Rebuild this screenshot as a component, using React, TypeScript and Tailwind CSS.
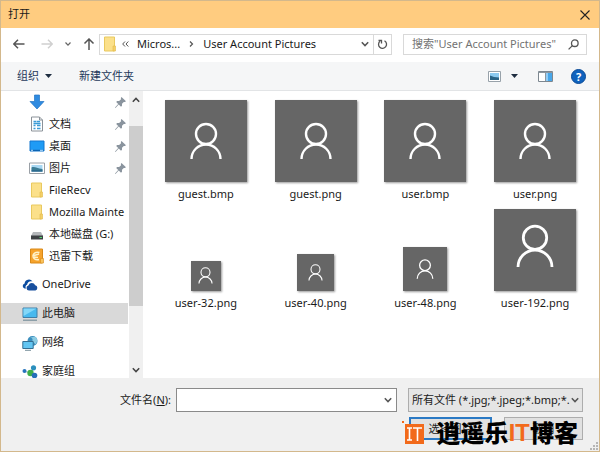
import { ReactNode, useState } from "react";

const files = [
  { name: "guest.bmp", box: "w-[82px] h-[82px]", icon: "w-[82px] h-[82px]" },
  { name: "guest.png", box: "w-[82px] h-[82px]", icon: "w-[82px] h-[82px]" },
  { name: "user.bmp", box: "w-[82px] h-[82px]", icon: "w-[82px] h-[82px]" },
  { name: "user.png", box: "w-[82px] h-[82px]", icon: "w-[82px] h-[82px]" },
  { name: "user-32.png", box: "w-[30px] h-[30px] pb-[2px]", icon: "w-[37px] h-[37px]" },
  { name: "user-40.png", box: "w-[37px] h-[37px]", icon: "w-[37px] h-[37px]" },
  { name: "user-48.png", box: "w-[44px] h-[44px]", icon: "w-[44px] h-[44px]" },
  { name: "user-192.png", box: "w-[82px] h-[82px] pb-2", icon: "w-[96px] h-[96px]" },
];

function Person({ size }: { size: string }) {
  return (
    <svg className={`${size} shrink-0`} viewBox="0 0 82 82" fill="none" stroke="#fff" strokeWidth="2.4">
      <circle cx="41" cy="34" r="10" />
      <path d="M26.5 59a14.5 14.5 0 0 1 29 0" />
    </svg>
  );
}

function Folder() {
  return (
    <svg className="h-4 w-4 shrink-0" viewBox="0 0 16 16">
      <path d="M2.5 1h10v14h-10z" fill="#fbe08a" stroke="#e9c95f" />
      <path d="M11 10h2.5v5H11z" fill="#f5d067" stroke="#e0b94b" strokeWidth=".6" />
    </svg>
  );
}

function Pin() {
  return (
    <svg className="h-[11px] w-[11px] shrink-0" viewBox="0 0 11 11" fill="#8a949e">
      <path d="M6.5 0 11 4.3 9.8 5 8.8 4.9 7 6.8v2l-1 .9L3.7 7.6.5 11 0 10.6 3.2 7 1.2 4.9l.9-.9 2 .1L6.1 2.2 5.8 1z" />
    </svg>
  );
}

function Chevron({ up = false }: { up?: boolean }) {
  return (
    <svg className="h-2 w-2 shrink-0" viewBox="0 0 8 8" fill="none" stroke="currentColor" strokeWidth="1.5">
      <path d={up ? "M.8 5.8 4 2.4l3.2 3.4" : "M.8 2.2 4 5.6l3.2-3.4"} />
    </svg>
  );
}

const icons: Record<string, ReactNode> = {
  download: (
    <svg className="h-4 w-4 shrink-0" viewBox="0 0 16 16">
      <path d="M5.5 1h5v6.5H15L8 15 1 7.5h4.5z" fill="#2f8be0" stroke="#2274c4" strokeWidth=".7" />
    </svg>
  ),
  doc: (
    <svg className="h-4 w-4 shrink-0" viewBox="0 0 16 16">
      <path d="M2.5 1h8l3 3v11h-11z" fill="#fff" stroke="#8b9299" />
      <path d="M10.5 1v3h3" fill="none" stroke="#8b9299" />
      <path d="M4.5 5.5h3M4.5 7.500h7M8 5.500h3M4.500 9.500h2M8 9.500h3.500M4.500 12.500h2M8 12.500h3.500" stroke="#3b9bd6" strokeWidth="1.3" />
    </svg>
  ),
  desktop: (
    <svg className="h-4 w-4 shrink-0" viewBox="0 0 16 16">
      <path d="M1 3h14v10H1z" fill="#1e9bf5" stroke="#1377cf" />
      <path d="M1.5 12.3h13" stroke="#0b5ca8" />
      <path d="M2 12.3h2M11 12.3h3" stroke="#b8e0ff" />
    </svg>
  ),
  picture: (
    <svg className="h-4 w-4 shrink-0" viewBox="0 0 16 16">
      <path d="M.5 3h15v10.5H.5z" fill="#fff" stroke="#9aa0a6" />
      <path d="M2.5 5h11v6.5h-11z" fill="#a9d8f3" />
      <path d="M2.5 7.5c3-1.5 5 1 11 1.5v2.5h-11z" fill="#3c7c94" />
      <path d="M2.5 10.5h11v1h-11z" fill="#1d5b86" />
    </svg>
  ),
  folder: <Folder />,
  drive: (
    <svg className="h-4 w-4 shrink-0" viewBox="0 0 16 16">
      <path d="M4 6h8l2 4H2z" fill="#b4b7ba" />
      <path d="M2 9.5h12v4H2z" fill="#3d4144" />
      <path d="M10.500 11H13v1h-2.500z" fill="#53d56a" />
    </svg>
  ),
  thunder: (
    <svg className="h-4 w-4 shrink-0" viewBox="0 0 16 16">
      <path d="M1.5 1h12v14h-12z" fill="#f6a32c" stroke="#d98918" />
      <path d="M11.5 10.500h3V15h-3z" fill="#f8c35c" stroke="#d98918" strokeWidth=".6" />
      <path d="M10.5 4.500C6 3.500 4 6 4 8s2 4.500 6 3.500M5 7.500l5-1.500M5 9l4 .5" fill="none" stroke="#fff3c9" strokeWidth="1.5" />
    </svg>
  ),
  cloud: (
    <svg className="h-4 w-4 shrink-0" viewBox="0 0 16 16">
      <path d="M4 11.5H2.6a2.6 2.6 0 0 1 0-5A4.3 4.3 0 0 1 10.5 4.5c-3-.8-5 .8-5.3 3C3.5 8 3 10 4 11.5z" fill="#0b4ca0" />
      <path d="M7 13.5a2.6 2.6 0 0 1-.6-5.1 3.7 3.7 0 0 1 6.8-.1A2.7 2.7 0 0 1 13.5 13.5z" fill="#174f9e" />
    </svg>
  ),
  pc: (
    <svg className="h-4 w-4 shrink-0" viewBox="0 0 16 16">
      <path d="M1 2h14v9.5H1z" fill="#48b9ee" stroke="#407ea6" />
      <path d="M1.5 2.5h13L1.500 10z" fill="#83d7f8" />
      <path d="M1 14.2h14" stroke="#78909c" strokeWidth="1.2" />
    </svg>
  ),
  network: (
    <svg className="h-4 w-4 shrink-0" viewBox="0 0 16 16">
      <circle cx="10.5" cy="6" r="5" fill="#3b8fbe" />
      <path d="M8 2.5c2 0 3 1.5 2.5 3S13 8 13.5 9.5C16 7 15.5 3 13 1.8z" fill="#8bcbe2" />
      <path d="M.8 6.500h10.400v7H.8z" fill="#62c5f2" stroke="#356f93" />
      <path d="M3 15.300h6" stroke="#78909c" />
    </svg>
  ),
  home: (
    <svg className="h-4 w-4 shrink-0" viewBox="0 0 16 16">
      <path d="M3 7.5 9 9l3-5M9 9l3 4" fill="none" stroke="#9ab7c4" />
      <circle cx="2.5" cy="7" r="2" fill="#2774bd" />
      <circle cx="11.5" cy="3.8" r="2.6" fill="#2b8fbd" />
      <circle cx="8.500" cy="9" r="3.200" fill="#3faf49" />
      <circle cx="12.500" cy="11.500" r="2.800" fill="#256fb8" />
    </svg>
  ),
};

const quickItems = [
  { icon: "download", label: "", pinned: true },
  { icon: "doc", label: "文档", pinned: true },
  { icon: "desktop", label: "桌面", pinned: true },
  { icon: "picture", label: "图片", pinned: true },
  { icon: "folder", label: "FileRecv", pinned: false },
  { icon: "folder", label: "Mozilla Mainte", pinned: false },
  { icon: "drive", label: "本地磁盘 (G:)", pinned: false },
  { icon: "thunder", label: "迅雷下载", pinned: false },
];

const rootItems = [
  { icon: "cloud", label: "OneDrive" },
  { icon: "pc", label: "此电脑" },
  { icon: "network", label: "网络" },
  { icon: "home", label: "家庭组" },
];

function TitleBar() {
  return (
    <header className="flex h-[27px] shrink-0 items-center justify-between bg-[#ffcc80] pl-[7px] pr-[9px]">
      <h1>打开</h1>
      <button aria-label="关闭">
        <svg className="h-[10px] w-[10px]" viewBox="0 0 10 10" stroke="#222" strokeWidth="1.1">
          <path d="m.5.5 9 9M9.5.5l-9 9" />
        </svg>
      </button>
    </header>
  );
}

function AddressRow() {
  return (
    <div className="flex h-[34px] shrink-0 items-center bg-white px-3 pb-1 pt-[2px]">
      <div className="flex w-[86px] shrink-0 items-center">
        <button aria-label="后退" className="mr-4">
          <svg className="h-3 w-3" viewBox="0 0 12 12" fill="none" stroke="#555" strokeWidth="1.5">
            <path d="M11.5 6H1M5 1.8.8 6 5 10.2" />
          </svg>
        </button>
        <button aria-label="前进" className="mr-3">
          <svg className="h-3 w-3" viewBox="0 0 12 12" fill="none" stroke="#d0d0d0" strokeWidth="1.5">
            <path d="M.5 6H11M7 1.8 11.2 6 7 10.2" />
          </svg>
        </button>
        <button aria-label="最近的位置" className="mr-3">
          <svg className="h-[6px] w-[6px]" viewBox="0 0 6 6" fill="none" stroke="#666" strokeWidth="1.2">
            <path d="m.5 1.500 2.500 2.700 2.500-2.700" />
          </svg>
        </button>
        <button aria-label="上移">
          <svg className="h-3 w-3" viewBox="0 0 12 12" fill="none" stroke="#555" strokeWidth="1.5">
            <path d="M6 12V1M1.5 5.5 6 1l4.5 4.5" />
          </svg>
        </button>
      </div>
      <nav className="mr-[11px] flex h-[21px] min-w-0 flex-1 items-center border border-[#d9d9d9] pl-[2px]">
        <Folder />
        <button aria-label="上级文件夹" className="ml-1 mr-2">
          <svg className="h-[6px] w-[7px]" viewBox="0 0 7 6" fill="none" stroke="#555">
            <path d="M3 .5.7 3 3 5.500M6.300.5 4 3l2.300 2.500" />
          </svg>
        </button>
        <button className="whitespace-nowrap">Micros...</button>
        <svg className="mx-[9px] h-[6px] w-[5px] shrink-0" viewBox="0 0 5 6" fill="none" stroke="#555" strokeWidth="1.2">
          <path d="m1 .5 2.500 2.500L1 5.500" />
        </svg>
        <button className="min-w-0 flex-1 truncate text-left">User Account Pictures</button>
        <button aria-label="以前的位置" className="mr-1 text-[#555]">
          <Chevron />
        </button>
        <button aria-label="刷新" className="flex h-full w-[18px] items-center justify-center border-l border-[#d9d9d9]">
          <svg className="h-[11px] w-[11px]" viewBox="0 0 11 11" fill="none" stroke="#555" strokeWidth="1.3">
            <path d="M7.500 1.800a4 4 0 1 1-4.500.4" />
            <path d="M1.500 1.500h3v3" />
          </svg>
        </button>
      </nav>
      <form className="flex h-[21px] w-[184px] shrink-0 items-center border border-[#d9d9d9] pl-2 pr-[7px]" onSubmit={(e) => e.preventDefault()}>
        <input
          type="text"
          aria-label="搜索"
          placeholder={'搜索"User Account Pictures"'}
          className="min-w-0 flex-1 outline-none placeholder:text-[#737373]"
        />
        <button aria-label="搜索">
          <svg className="h-[11px] w-[11px]" viewBox="0 0 11 11" fill="none" stroke="#555" strokeWidth="1.3">
            <circle cx="6.8" cy="4.2" r="3.3" />
            <path d="M4.4 6.6.6 10.4" />
          </svg>
        </button>
      </form>
    </div>
  );
}

function Toolbar() {
  return (
    <div className="flex h-[29px] shrink-0 items-center border-b border-[#e2e4e6] bg-[#f5f6f7] pl-4 pr-[13px] text-[#1e395b]">
      <button className="flex items-center gap-[6px]">
        组织
        <svg className="h-1 w-[7px]" viewBox="0 0 7 4">
          <path d="M0 0h7L3.5 4z" fill="#1e2d40" />
        </svg>
      </button>
      <button className="ml-[27px]">新建文件夹</button>
      <div className="ml-auto flex items-center">
        <button aria-label="更改视图" className="flex items-center gap-[10px]">
          <svg className="h-[11px] w-[13px]" viewBox="0 0 13 11">
            <path d="M.5.5h12v10H.5z" fill="#fff" stroke="#98a2aa" />
            <path d="M2 2h9v7H2z" fill="#8ccaf0" />
            <path d="M2 4.5 6 6l5 .5V9H2z" fill="#2a6385" />
          </svg>
          <svg className="h-1 w-[7px]" viewBox="0 0 7 4">
            <path d="M0 0h7L3.5 4z" fill="#1e2d40" />
          </svg>
        </button>
        <button aria-label="预览窗格" className="ml-5">
          <svg className="h-[11px] w-[15px]" viewBox="0 0 15 11">
            <path d="M.5.5h14v10H.5z" fill="#fff" stroke="#7d8790" />
            <path d="M8 2h6v8H8z" fill="#48a7ea" />
            <path d="M7.500 1v9M.5 1.500h14" stroke="#8d979f" />
            <path d="M8 2h2v8H8z" fill="#93cdf5" />
          </svg>
        </button>
        <button aria-label="帮助" className="ml-[18px] flex h-[15px] w-[15px] items-center justify-center rounded-full border border-[#0a4a96] bg-[#0f62bd] font-bold leading-none text-white">
          ?
        </button>
      </div>
    </div>
  );
}

function Sidebar() {
  const [selected, setSelected] = useState("此电脑");
  return (
    <aside className="flex w-[142px] shrink-0">
      <div className="min-w-0 flex-1 overflow-hidden">
        {quickItems.map((item) => (
          <button
            key={item.icon + item.label}
            aria-label={item.label || "下载"}
            className="flex h-[22px] w-full items-center pl-7 pr-[2px]"
            onClick={() => setSelected(item.label)}
          >
            {icons[item.icon]}
            <span className="ml-1 flex-1 overflow-hidden whitespace-nowrap text-left">{item.label}</span>
            {item.pinned && <Pin />}
          </button>
        ))}
        <div className="mt-[7px] flex flex-col gap-2">
          {rootItems.map((item) => (
            <button
              key={item.label}
              className={`flex h-[21px] w-full items-center pl-[21px] ${selected === item.label ? "bg-[#d9d9d9]" : ""}`}
              onClick={() => setSelected(item.label)}
            >
              {icons[item.icon]}
              <span className="ml-1 whitespace-nowrap">{item.label}</span>
            </button>
          ))}
        </div>
      </div>
      <div className="ml-[1px] flex w-[14px] flex-col items-center bg-[#f0f0f0] text-[#444]">
        <button aria-label="向上滚动" className="flex h-[35px] items-start pt-[5px]">
          <Chevron up />
        </button>
        <div className="w-full flex-1 bg-[#cdcdcd]" />
        <button aria-label="向下滚动" className="flex h-[72px] items-end pb-1">
          <Chevron />
        </button>
      </div>
    </aside>
  );
}

function FileGrid() {
  return (
    <main className="grid min-w-0 flex-1 auto-rows-[109px] grid-cols-4 pl-2 pr-[9px] pt-[9px]">
      {files.map((file) => (
        <button key={file.name} className="flex flex-col items-center">
          <span className="flex h-[82px] items-end">
            <span className={`${file.box} flex items-center justify-center overflow-hidden bg-[#666] shadow-[1px_1px_2px_#999]`}>
              <Person size={file.icon} />
            </span>
          </span>
          <span className="mt-1 leading-4">{file.name}</span>
        </button>
      ))}
    </main>
  );
}

function Footer() {
  return (
    <footer className="relative h-[73px] shrink-0 bg-[#f0f0f0] pr-4 pt-[10px]">
      <div className="flex items-center">
        <label htmlFor="filename" className="w-[175px] shrink-0 pr-[5px] text-right">
          文件名(<u>N</u>):
        </label>
        <div className="mr-[11px] flex h-6 min-w-0 flex-1 items-center border border-[#8a8a8a] bg-white">
          <input id="filename" type="text" className="h-full w-full px-1 outline-none" />
          <span className="mr-1 text-[#555]">
            <Chevron />
          </span>
        </div>
        <div className="relative w-[175px] shrink-0">
          <select aria-label="文件类型" className="h-6 w-full appearance-none border border-[#adadad] bg-[#e5e5e5] pl-[3px] pr-3">
            <option>所有文件 (*.jpg;*.jpeg;*.bmp;*.</option>
          </select>
          <span className="pointer-events-none absolute right-1 top-2 text-[#555]">
            <Chevron />
          </span>
        </div>
      </div>
      <div className="mt-[5px] flex justify-end gap-3">
        <button className="h-[23px] w-[83px] border-2 border-[#2a79c4] bg-[#e1e1e1] leading-none">选择图片</button>
        <button className="h-[23px] w-[79px] border border-[#adadad] bg-[#e1e1e1] leading-none">取消</button>
      </div>
      <div className="pointer-events-none absolute bottom-[6px] right-[21px] flex items-center text-2xl leading-6 text-black">
        <svg className="mr-[10px] h-6 w-6" viewBox="0 0 24 24">
          <path d="M3 3h19v20H3z" fill="#f26a1b" />
          <path d="M0 0h2v2H0z" fill="#f26a1b" />
          <path d="M5 7h5M7.5 7v12M5 19h5M11 7h9M15.5 7v13" fill="none" stroke="#fff" strokeWidth="1.6" />
        </svg>
        <span className="font-black">逍遥乐</span>
        <span className="font-['Roboto',sans-serif] font-bold text-[#f26a1b]">IT</span>
        <span className="font-black">博客</span>
      </div>
      <svg className="absolute bottom-[1px] right-[1px] h-2 w-2" viewBox="0 0 8 8" fill="#b5b5b5">
        <path d="M6 0h2v2H6zM3 3h2v2H3zM6 3h2v2H6zM0 6h2v2H0zM3 6h2v2H3zM6 6h2v2H6z" />
      </svg>
    </footer>
  );
}

export default function App() {
  return (
    <div className="flex h-screen flex-col overflow-hidden border border-[#d3b88c] bg-white font-['Noto_Sans','Noto_Sans_CJK_SC',sans-serif] text-[11px] text-[#1a1a1a]">
      <TitleBar />
      <AddressRow />
      <Toolbar />
      <div className="flex min-h-0 flex-1">
        <Sidebar />
        <FileGrid />
      </div>
      <Footer />
    </div>
  );
}
